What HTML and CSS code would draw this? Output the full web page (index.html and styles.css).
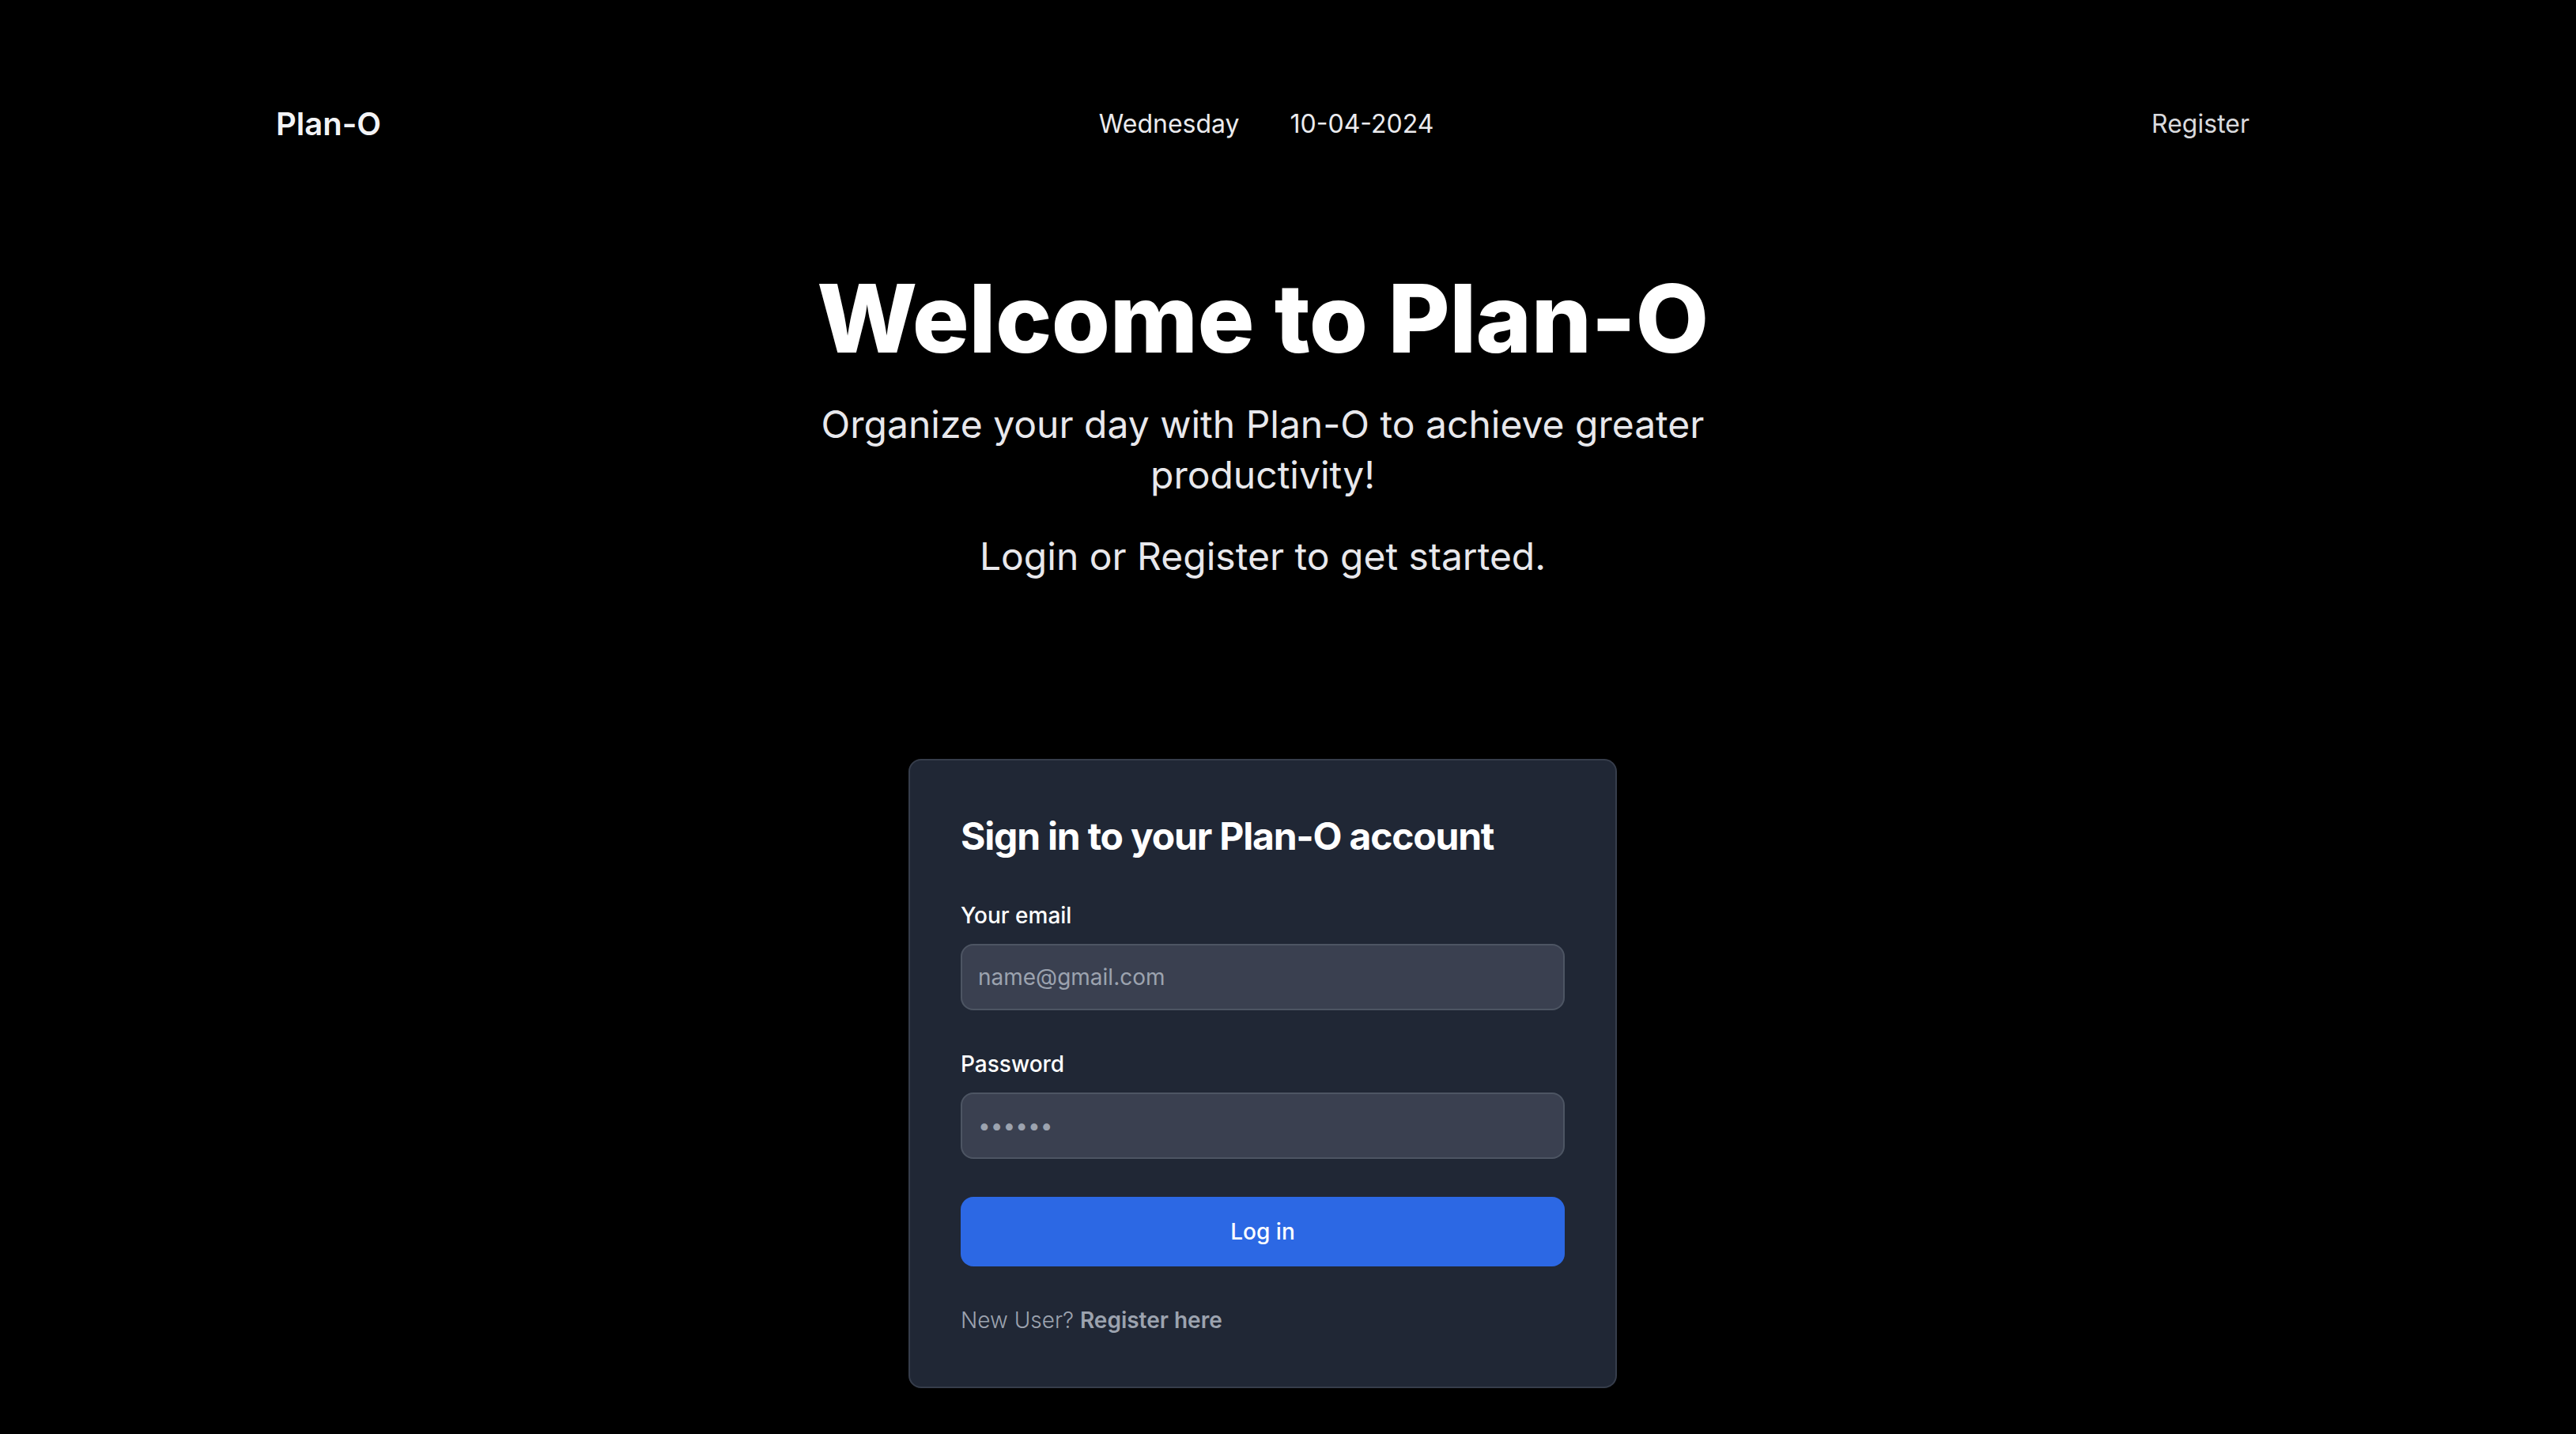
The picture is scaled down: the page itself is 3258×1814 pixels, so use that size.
FILE: index.html
```html
<!DOCTYPE html>
<html lang="en">
<head>
<meta charset="utf-8">
<title>Plan-O</title>
<link rel="stylesheet" href="styles.css">
</head>
<body>
<div class="site">
  <header class="nav">
    <div class="nav-inner">
      <a class="brand" href="#">Plan-O</a>
      <ul class="nav-center">
        <li>Wednesday</li>
        <li>10-04-2024</li>
      </ul>
      <a class="nav-link" href="#">Register</a>
    </div>
  </header>

  <section class="hero">
    <h1 class="hero-title">Welcome to Plan-O</h1>
    <p class="hero-sub">Organize your day with Plan-O to achieve greater productivity!</p>
    <p class="hero-cta">Login or Register to get started.</p>
  </section>

  <section class="auth">
    <div class="card">
      <h2 class="card-title">Sign in to your Plan-O account</h2>
      <form class="form">
        <div class="field">
          <label class="label" for="email">Your email</label>
          <input class="input" type="email" id="email" placeholder="name@gmail.com">
        </div>
        <div class="field">
          <label class="label" for="password">Password</label>
          <input class="input input-pass" type="password" id="password" placeholder="••••••">
        </div>
        <button class="btn" type="button">Log in</button>
        <p class="note">New User? <a class="note-link" href="#">Register here</a></p>
      </form>
    </div>
  </section>
</div>
</body>
</html>
```

FILE: styles.css
```css
html, body {
  margin: 0;
  padding: 0;
  background: #000;
}

body {
  font-family: Inter, "Noto Sans", "Liberation Sans", sans-serif;
  color: #fff;
}

.site {
  width: 3194px;
  padding-top: 97px;
}

a {
  text-decoration: none;
}

.nav-inner {
  max-width: 2560px;
  margin: 0 auto;
  padding: 32px;
  box-sizing: border-box;
  display: flex;
  justify-content: space-between;
  align-items: center;
}

.brand {
  font-size: 40px;
  line-height: 56px;
  font-weight: 600;
  color: #f3f4f6;
}

.nav-center {
  list-style: none;
  margin: 0;
  padding: 0;
  display: flex;
  gap: 64px;
  font-size: 32px;
  line-height: 48px;
  color: #ebebee;
}

.nav-link {
  font-size: 32px;
  line-height: 48px;
  color: #d9dade;
}

.hero {
  text-align: center;
  padding-top: 126px;
  max-width: 2560px;
  margin: 0 auto;
}

.hero-title {
  margin: 0 auto 42px;
  font-size: 120px;
  line-height: 120px;
  font-weight: 800;
  letter-spacing: -0.5px;
  color: #fff;
}

.hero-sub {
  margin: 0 auto;
  max-width: 1150px;
  font-size: 48px;
  line-height: 64px;
  font-weight: 400;
  color: #e8e8ec;
}

.hero-cta {
  margin: 39px 0 0;
  font-size: 48px;
  line-height: 64px;
  color: #e8e8ec;
}

.auth {
  display: flex;
  justify-content: center;
  margin-top: 224px;
}

.card {
  width: 896px;
  box-sizing: border-box;
  background: #202735;
  border: 2px solid #363d4b;
  border-radius: 16px;
  padding: 64px;
}

.card-title {
  margin: 0 0 48px;
  font-size: 48px;
  line-height: 64px;
  font-weight: 700;
  letter-spacing: -1.2px;
  color: #fff;
}

.form {
  display: flex;
  flex-direction: column;
  gap: 48px;
}

.field {
  display: flex;
  flex-direction: column;
}

.label {
  font-size: 28px;
  line-height: 40px;
  font-weight: 500;
  color: #fff;
  margin-bottom: 16px;
}

.input {
  font-family: inherit;
  font-size: 28px;
  line-height: 40px;
  padding: 20px;
  background: #3a4050;
  border: 2px solid #4d5563;
  border-radius: 16px;
  color: #fff;
  outline: none;
  box-sizing: border-box;
  width: 100%;
}

.input::placeholder {
  color: #9ca3af;
  opacity: 1;
}

.btn {
  font-family: inherit;
  font-size: 28px;
  line-height: 40px;
  font-weight: 500;
  color: #fff;
  background: #2c68e4;
  border: none;
  border-radius: 16px;
  padding: 24px 40px;
  width: 100%;
  cursor: pointer;
}

.note {
  margin: 0;
  font-size: 28px;
  line-height: 40px;
  font-weight: 300;
  color: #9ca3af;
}

.note-link {
  font-weight: 600;
  color: #9ca3af;
}
```
